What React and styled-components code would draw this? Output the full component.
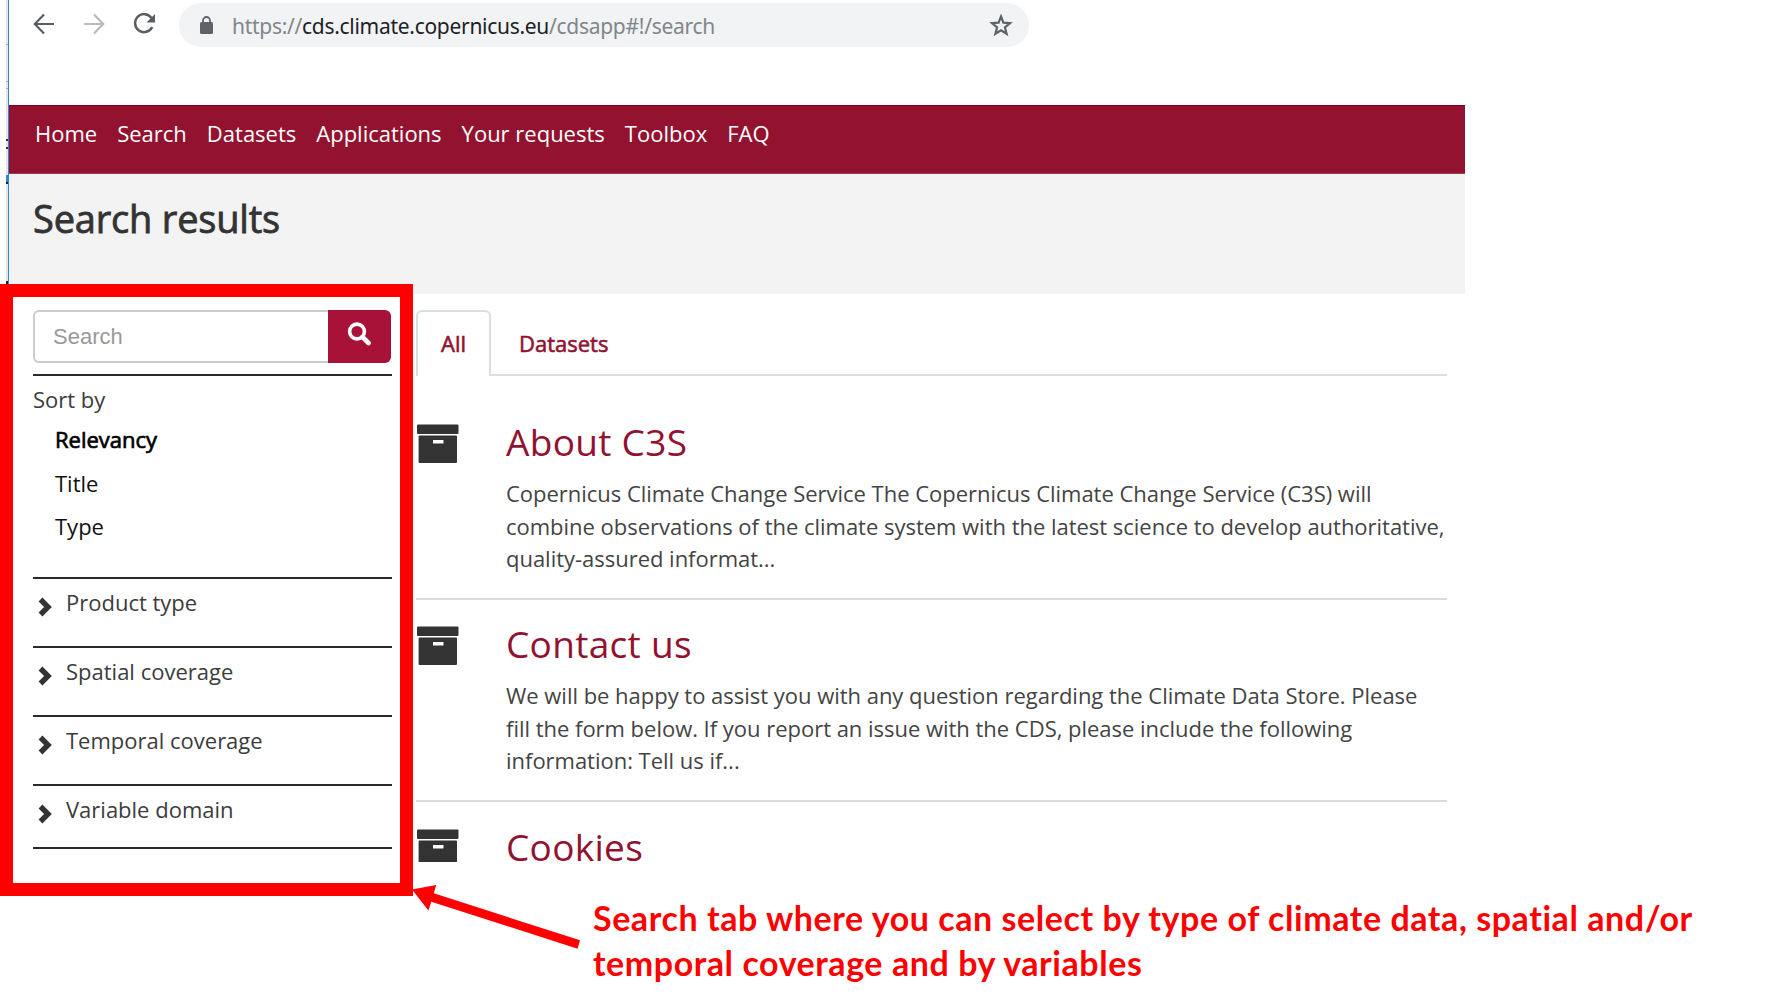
import React from 'react';
import styled, { createGlobalStyle, css } from 'styled-components';

const GlobalStyle = createGlobalStyle`
  * { box-sizing: border-box; }
  body { margin: 0; background: #fff; overflow: hidden; }
`;

const Slide = styled.div`
  position: relative;
  width: 1770px;
  height: 1008px;
  overflow: hidden;
  background: #fff;
  color: #3c3c3c;
  font-family: 'Open Sans', 'Noto Sans', sans-serif;
  font-size: 22px;
`;

const Browser = styled.div`
  width: 1465px;
  padding-left: 9px;
`;

const WindowEdge = styled.div`
  position: absolute;
  left: 6px;
  top: 0;
  width: 3px;
  height: 284px;
  background: #e3e6e9;
  border-right: 1px solid #2f86d2;
`;

const EdgeMark = styled.i`
  position: absolute;
  left: 0;
  top: ${(p) => p.$y}px;
  width: 2px;
  height: ${(p) => p.$h}px;
  background: ${(p) => p.$c};
`;

const Toolbar = styled.div`
  display: flex;
  align-items: flex-start;
  height: 105px;
  padding: 3px 0 0 24px;
`;

const NavIcons = styled.div`
  display: flex;
  width: 146px;
  height: 44px;
  padding-top: 10px;
  gap: 28px;
  svg { display: block; flex: none; }
`;

const AddressBar = styled.div`
  display: flex;
  align-items: center;
  width: 850px;
  height: 44px;
  padding: 0 16px 0 21px;
  border-radius: 22px;
  background: #f1f3f4;
`;

const Url = styled.span`
  flex: 1;
  margin-left: 19px;
  padding-top: 1px;
  font-family: 'Noto Sans', 'Open Sans', sans-serif;
  font-size: 21px;
  line-height: 30px;
  letter-spacing: -0.29px;
  color: #80868b;
  white-space: nowrap;
  b { font-weight: 400; color: #202124; }
`;

const MainNav = styled.nav`
  display: flex;
  gap: 20px;
  height: 69px;
  padding: 12px 0 0 26px;
  background: #921230;
  border-bottom: 1px solid #a03c55;
  border-top: 1px solid #7c0020;
`;

const NavLink = styled.a`
  color: #fff;
  font-size: 22px;
  line-height: 30px;
  white-space: nowrap;
`;

const Hero = styled.header`
  height: 120px;
  padding: 17px 0 0 24px;
  background: #f3f3f3;
`;

const Title = styled.h1`
  margin: 0;
  font-size: 38px;
  font-weight: 400;
  line-height: 54px;
  letter-spacing: -0.2px;
  color: #333;
  -webkit-text-stroke: 0.8px currentColor;
`;

const Columns = styled.div`
  display: flex;
  align-items: flex-start;
`;

const Sidebar = styled.aside`
  width: 359px;
  margin: 16px 24px 0 24px;
`;

const SearchForm = styled.div`
  display: flex;
  width: 358px;
  height: 53px;
`;

const SearchInput = styled.div`
  flex: 1;
  padding: 0 18px;
  border: 2px solid #ccc;
  border-right: 0;
  border-radius: 6px 0 0 6px;
  color: #999;
  font-family: 'Liberation Sans', Arial, sans-serif;
  font-size: 22px;
  line-height: 49px;
`;

const SearchButton = styled.div`
  display: flex;
  justify-content: center;
  width: 63px;
  padding: 12px 2px 0 0;
  border-radius: 0 6px 6px 0;
  background: #a91238;
`;

const SortBlock = styled.section`
  height: 203px;
  margin-top: 11px;
  padding-top: 7px;
  border-top: 2px solid #2a2a2a;
`;

const SortLabel = styled.div`
  line-height: 32px;
`;

const SortOption = styled.div`
  height: 43.5px;
  padding: 8px 0 0 22px;
  line-height: 32px;
  color: #111;
  ${(p) => p.$active && css`
    color: #000;
    -webkit-text-stroke: 0.7px #000;
  `}
`;

const Facet = styled.div`
  display: flex;
  height: ${(p) => (p.$last ? 65 : 69)}px;
  padding: 7px 0 0 5px;
  border-top: 2px solid #2a2a2a;
  ${(p) => p.$last && css`border-bottom: 2px solid #2a2a2a;`}
  line-height: 32px;
  svg { flex: none; margin: 11px 14px 0 0; }
`;

const Results = styled.main`
  width: 1031px;
  padding-top: 16px;
`;

const Tabs = styled.div`
  display: flex;
  height: 66px;
  border-bottom: 2px solid #dadfe3;
`;

const Tab = styled.div`
  height: 66px;
  padding: 16px 26px 0;
  border: 2px solid transparent;
  line-height: 30px;
  color: #921230;
  -webkit-text-stroke: 0.6px #921230;
  ${(p) => p.$active && css`
    width: 75px;
    padding: 16px 0 0 23px;
    border-color: #dadfe3;
    border-bottom: 0;
    border-radius: 6px 6px 0 0;
    background: #fff;
  `}
`;

const Result = styled.article`
  display: flex;
  height: ${(p) => p.$h}px;
  padding-top: ${(p) => p.$top}px;
  ${(p) => !p.$last && css`border-bottom: 2px solid #dcdcdc;`}
`;

const ResultIcon = styled.div`
  flex: none;
  width: 42px;
  margin: 7px 0 0 1px;
  overflow: hidden;
  svg { display: block; }
`;

const ResultBody = styled.div`
  margin-left: 47px;
`;

const ResultTitle = styled.h2`
  margin: 0;
  height: 60px;
  font-size: 37px;
  font-weight: 400;
  line-height: 50px;
  letter-spacing: 0.3px;
  color: #921230;
`;

const Line = styled.div`
  height: 32.5px;
  line-height: 32.5px;
  font-size: 22px;
  letter-spacing: -0.02px;
  white-space: nowrap;
  color: #444;
`;

const Highlight = styled.div`
  position: absolute;
  left: 0;
  top: 284px;
  width: 413px;
  height: 612px;
  border: 13px solid #f00;
`;

const Pointer = styled.svg`
  position: absolute;
  left: 412px;
  top: 880px;
`;

const Caption = styled.p`
  position: absolute;
  left: 593px;
  top: 895px;
  margin: 0;
  color: #f00;
  font-family: Lato, 'Open Sans', sans-serif;
  font-size: 34px;
  font-weight: 700;
  line-height: 45.3px;
  letter-spacing: 0.56px;
  white-space: nowrap;
`;

const Archive = () => (
  <svg width="42" height="40" viewBox="0 0 42 40" fill="#333">
    <rect x="0" y="0.5" width="41.5" height="9.5" rx="1" />
    <path fillRule="evenodd" d="M2.6 11.5h36.4q1 0 1 1v25.500q0 1-1 1H2.600q-1 0-1-1V12.500q0-1 1-1zM16 16h10.500v3.600H16z" />
  </svg>
);

const Chevron = () => (
  <svg width="14" height="20" viewBox="0 0 14 20">
    <path d="M2.500 2.500 10 10l-7.500 7.500" fill="none" stroke="#333" strokeWidth="5.400" />
  </svg>
);

const NAV = ['Home', 'Search', 'Datasets', 'Applications', 'Your requests', 'Toolbox', 'FAQ'];
const FACETS = ['Product type', 'Spatial coverage', 'Temporal coverage', 'Variable domain'];
const RESULTS = [
  {
    title: 'About C3S', h: 224, top: 41,
    lines: [
      'Copernicus Climate Change Service The Copernicus Climate Change Service (C3S) will',
      'combine observations of the climate system with the latest science to develop authoritative,',
      'quality-assured informat...',
    ],
  },
  {
    title: 'Contact us', h: 202, top: 19,
    lines: [
      'We will be happy to assist you with any question regarding the Climate Data Store. Please',
      'fill the form below. If you report an issue with the CDS, please include the following',
      'information: Tell us if...',
    ],
  },
  { title: 'Cookies', h: 60, top: 20, lines: [] },
];

export default function App() {
  return (
    <Slide>
      <GlobalStyle />
      <Browser>
        <Toolbar>
          <NavIcons>
            <svg width="22" height="22" viewBox="0 0 22 22" fill="none" stroke="#5a5e62" strokeWidth="2.200">
              <path d="M21 11H2M11 1.500 1.800 11l9.200 9.500" />
            </svg>
            <svg width="22" height="22" viewBox="0 0 22 22" fill="none" stroke="#b9bbbd" strokeWidth="2.200">
              <path d="M1 11h19M11 1.500l9.200 9.500-9.200 9.500" />
            </svg>
            <svg width="23" height="22" viewBox="0 0 23 22">
              <path d="M18.500 5A9 9 0 1 0 19.200 14" fill="none" stroke="#5a5e62" strokeWidth="2.500" />
              <path d="M22 1v8.500h-8.500z" fill="#5a5e62" />
            </svg>
          </NavIcons>
          <AddressBar>
            <svg width="13" height="18" viewBox="0 0 13 18">
              <path d="M3 7V4.500a3.500 3.500 0 0 1 7 0V7" fill="none" stroke="#5f6368" strokeWidth="1.800" />
              <rect x="0" y="6" width="13" height="12" rx="1.500" fill="#5f6368" />
            </svg>
            <Url>https://<b>cds.climate.copernicus.eu</b>/cdsapp#!/search</Url>
            <svg width="24" height="24" viewBox="0 0 24 24" fill="none" stroke="#5f6368" strokeWidth="2.200">
              <path d="M12 3.500l2.400 6.100 6.600.5-5.100 4.200 1.700 6.500L12 17.200l-5.600 3.600 1.700-6.500L3 10.100l6.600-.5z" />
            </svg>
          </AddressBar>
        </Toolbar>
        <MainNav>
          {NAV.map((n) => <NavLink key={n}>{n}</NavLink>)}
        </MainNav>
        <Hero>
          <Title>Search results</Title>
        </Hero>
        <Columns>
          <Sidebar>
            <SearchForm>
              <SearchInput>Search</SearchInput>
              <SearchButton>
                <svg width="24" height="24" viewBox="0 0 24 24" fill="none" stroke="#fff">
                  <circle cx="10" cy="9.500" r="7.400" strokeWidth="3.600" />
                  <path d="M15.500 15l6 6" strokeWidth="4.600" strokeLinecap="round" />
                </svg>
              </SearchButton>
            </SearchForm>
            <SortBlock>
              <SortLabel>Sort by</SortLabel>
              <SortOption $active>Relevancy</SortOption>
              <SortOption>Title</SortOption>
              <SortOption>Type</SortOption>
            </SortBlock>
            {FACETS.map((f, i) => (
              <Facet key={f} $last={i === FACETS.length - 1}>
                <Chevron />
                {f}
              </Facet>
            ))}
          </Sidebar>
          <Results>
            <Tabs>
              <Tab $active>All</Tab>
              <Tab>Datasets</Tab>
            </Tabs>
            {RESULTS.map((r, i) => (
              <Result key={r.title} $h={r.h} $top={r.top} $last={i === RESULTS.length - 1}>
                <ResultIcon><Archive /></ResultIcon>
                <ResultBody>
                  <ResultTitle>{r.title}</ResultTitle>
                  {r.lines.map((l) => <Line key={l}>{l}</Line>)}
                </ResultBody>
              </Result>
            ))}
          </Results>
        </Columns>
      </Browser>
      <WindowEdge>
        <EdgeMark $y={44} $h={1} $c="#aaa" />
        <EdgeMark $y={81} $h={1} $c="#aaa" />
        <EdgeMark $y={88} $h={1} $c="#aaa" />
        <EdgeMark $y={139} $h={2} $c="#333" />
        <EdgeMark $y={147} $h={2} $c="#333" />
        <EdgeMark $y={175} $h={7} $c="#2f86d2" />
        <EdgeMark $y={182} $h={2} $c="#222" />
        <EdgeMark $y={281} $h={3} $c="#222" />
      </WindowEdge>
      <Highlight />
      <Pointer width="172" height="72" viewBox="412 880 172 72" fill="#f00">
        <path d="M412 889.500 436.200 885l-2.400 8.300L580 940.300l-2.400 8.400L431.300 901.700l-2.900 8.800z" />
      </Pointer>
      <Caption>
        Search tab where you can select by type of climate data, spatial and/or
        <br />
        temporal coverage and by variables
      </Caption>
    </Slide>
  );
}
